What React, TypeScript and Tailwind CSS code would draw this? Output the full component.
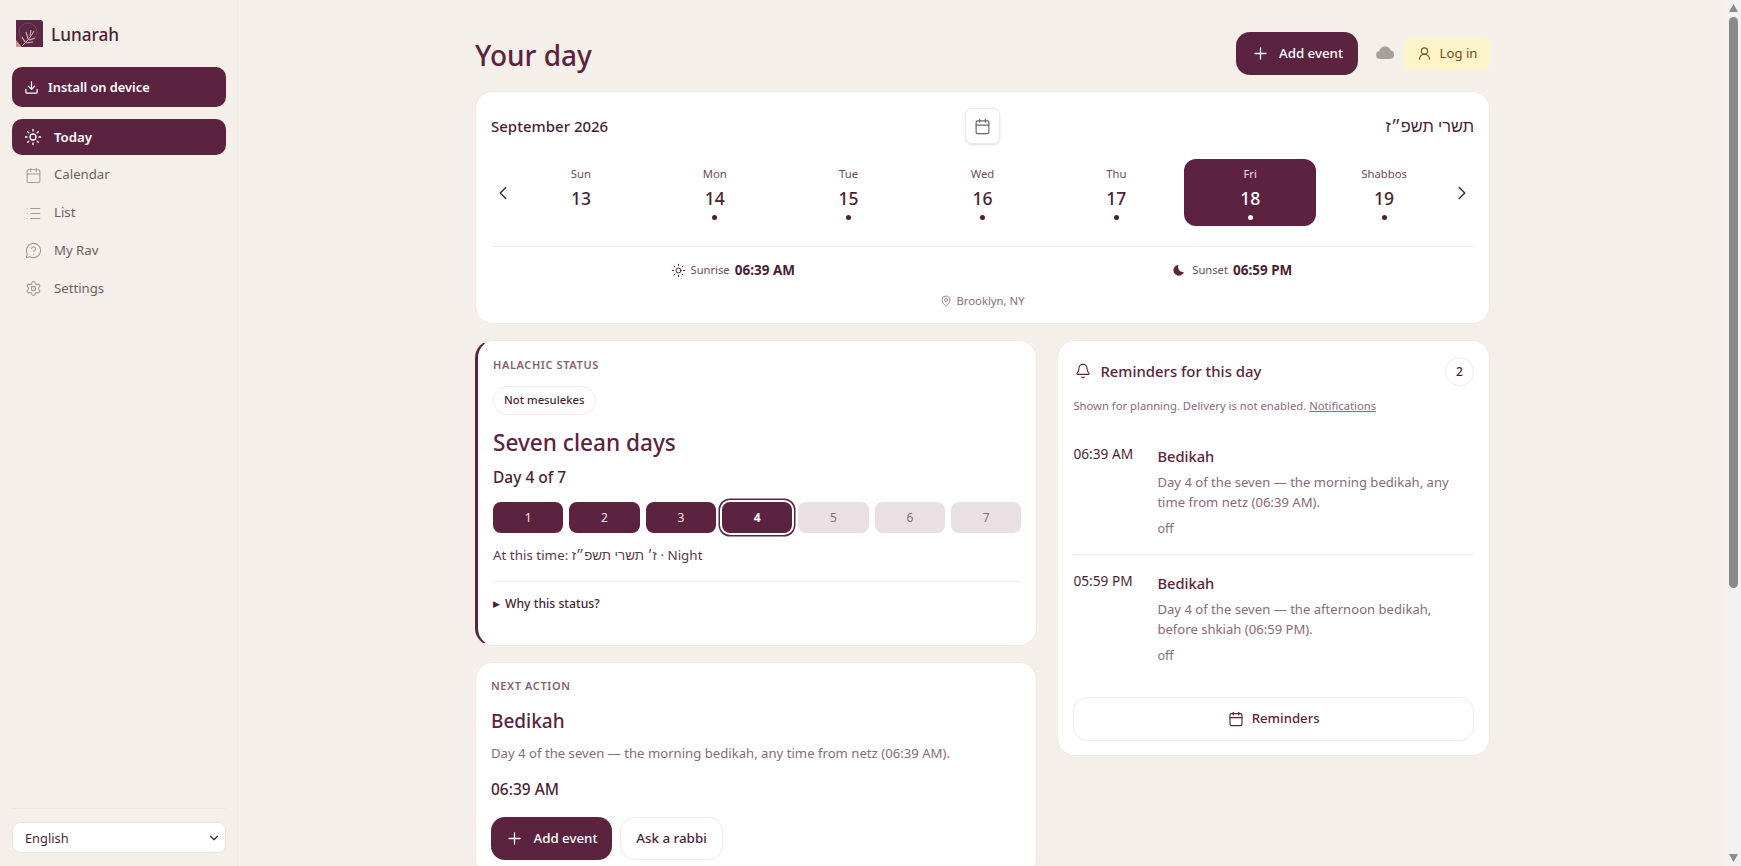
import React from "react";
import { Download, Sun, Calendar, List, MessageCircleQuestion, Settings, Plus, UserRound, ChevronLeft, ChevronRight, MapPin, Bell, ChevronDown } from "lucide-react";

const days = [
  { l: "Sun", n: 13, dot: false },
  { l: "Mon", n: 14, dot: true },
  { l: "Tue", n: 15, dot: true },
  { l: "Wed", n: 16, dot: true },
  { l: "Thu", n: 17, dot: true },
  { l: "Fri", n: 18, dot: true, sel: true },
  { l: "Shabbos", n: 19, dot: true },
];

function Logo() {
  return (
    <svg width="27" height="27" viewBox="0 0 27 27" className="shrink-0">
      <path d="M0 0H24Q27 0 27 3V27H0Z" fill="#5c2742" />
      <path d="M0 27V20L6 27Z" fill="#c99a8c" />
      <circle cx="12" cy="12" r="9" fill="none" stroke="#8a5a72" strokeWidth="0.6" />
      <path d="M6 26C11 21 15 17 18 11" fill="none" stroke="#dcb6c0" strokeWidth="1" />
      <path d="M9 22l-3-5M12 19l-2-7M14 16l1-6M10 23l7-1M13 20l6-2" fill="none" stroke="#d8aebb" strokeWidth="1.1" />
    </svg>
  );
}

function NavItem({ icon, label }: { icon: React.ReactNode; label: string }) {
  return (
    <div className="flex h-[37.7px] items-center gap-[12px] px-[12px] text-[13.2px] text-[#6d6160]">
      <span className="flex w-[18px] justify-center text-[#a39896]">{icon}</span>
      {label}
    </div>
  );
}

function Item({ time, body1, body2 }: { time: string; body1: string; body2: string }) {
  return (
    <div className="grid grid-cols-[84px_1fr]">
      <div className="text-[13.7px] leading-[20px] text-[#4a1f35]">{time}</div>
      <div>
        <div className="mt-[1px] text-[14.7px] leading-[22px] font-medium text-[#5c2340]">Bedikah</div>
        <div className="mt-[5px] text-[13.1px] leading-[20px] text-[#8a6a7a]">
          {body1}
          <br />
          {body2}
        </div>
        <div className="mt-[8px] text-[12.5px] leading-[18px] text-[#8a6a7a]">off</div>
      </div>
    </div>
  );
}

function Scrollbar() {
  return (
    <div className="sticky top-0 flex h-screen w-[15px] shrink-0 flex-col items-center bg-[#f1f1f1]">
      <svg width="9" height="8" viewBox="0 0 9 8" className="mt-[4px] shrink-0"><path d="M4.5 0L9 8H0Z" fill="#8a8a8a" /></svg>
      <div className="mt-[5px] h-[571px] w-[9px] rounded-t-[5px] rounded-b-[5px] bg-[#8a8a8a]" />
      <svg width="9" height="8" viewBox="0 0 9 8" className="mt-auto mb-[4px] shrink-0"><path d="M4.5 8L9 0H0Z" fill="#8a8a8a" /></svg>
    </div>
  );
}

export default function App() {
  return (
    <div className="flex min-h-[1253px] items-start bg-[#f5efea] font-['Noto_Sans','Liberation_Sans',sans-serif] text-[#4a1f35]">
      <aside className="sticky top-0 flex h-screen w-[238px] shrink-0 flex-col border-r border-[#efe7e2] pr-[11px] pl-[12px]">
        <div className="flex h-[67px] items-center gap-[8px] px-[4px] pb-[1px]">
          <Logo />
          <span className="pt-[3px] text-[17.2px] font-medium text-[#4a1f35]">Lunarah</span>
        </div>
        <div className="flex h-[40px] items-center gap-[9px] rounded-[10px] bg-[#5c2340] px-[12px] text-[12.8px] font-semibold text-white">
          <Download size={15} strokeWidth={2} />
          <span className="pt-[1px]">Install on device</span>
        </div>
        <div className="mt-[12px] flex h-[36px] items-center gap-[12px] rounded-[10px] bg-[#5c2340] px-[12px] text-[13.2px] font-semibold text-white">
          <span className="flex w-[18px] justify-center"><Sun size={18} strokeWidth={1.8} /></span>
          <span className="pt-[1px]">Today</span>
        </div>
        <div className="mt-[1.5px]">
          <NavItem icon={<Calendar size={17} strokeWidth={1.5} />} label="Calendar" />
          <NavItem icon={<List size={17} strokeWidth={1.5} />} label="List" />
          <NavItem icon={<MessageCircleQuestion size={17} strokeWidth={1.5} />} label="My Rav" />
          <NavItem icon={<Settings size={17} strokeWidth={1.5} />} label="Settings" />
        </div>
        <div className="mt-auto mb-[13px] border-t border-[#efe7e2] pt-[13px]">
          <div className="flex h-[31px] items-center justify-between rounded-[8px] border border-[#ece4df] bg-white pr-[2px] pl-[12px] text-[12.8px] text-[#4a1f35]">
            <span className="pt-[2px]">English</span>
            <ChevronDown size={14} strokeWidth={2} className="mr-[2px]" />
          </div>
        </div>
      </aside>

      <main className="min-w-0 flex-1 pt-[32px] pr-[236px] pl-[237px]">
        <header className="flex h-[43px] items-center justify-between">
          <h1 className="pt-[2px] text-[28px] leading-[46px] font-medium text-[#5c2340]">Your day</h1>
          <div className="flex items-center">
            <button className="flex h-[43px] w-[122px] items-center justify-center gap-[9px] rounded-[14px] bg-[#5c2340] text-[13.3px] font-medium text-white">
              <Plus size={19} strokeWidth={1.6} />
              Add event
            </button>
            <svg width="20" height="14" viewBox="0 0 20 14" className="mr-[9px] ml-[17px] mb-[4px]">
              <path d="M5 14a4 4 0 0 1-.8-7.9A6 6 0 0 1 15.6 5.2 4.5 4.5 0 0 1 15.5 14Z" fill="#a89e9e" />
            </svg>
            <div className="flex h-[32px] w-[86px] items-center justify-center gap-[8px] rounded-[6px] bg-[#fdf3c8] text-[13.2px] text-[#7a4a1f]">
              <UserRound size={15} strokeWidth={1.7} />
              Log in
            </div>
          </div>
        </header>

        <section className="mt-[16px] rounded-[18px] border border-[#f0e9e4] bg-white px-[15px] pt-[16px] pb-[13px]">
          <div className="grid h-[36px] grid-cols-3 items-center">
            <div className="text-[15px] font-medium text-[#4a1f35]">September 2026</div>
            <div className="flex justify-center">
              <div className="flex h-[36px] w-[35px] items-center justify-center rounded-[7px] border border-[#efe8e4] text-[#6d6160] shadow-sm">
                <Calendar size={17} strokeWidth={1.6} />
              </div>
            </div>
            <div dir="rtl" className="text-right text-[16.4px] font-medium text-[#4a1f35]">תשרי תשפ״ז</div>
          </div>
          <div className="mt-[15px] flex items-center">
            <div className="flex w-[24px] justify-center text-[#4a1f35]"><ChevronLeft size={22} strokeWidth={1.5} /></div>
            <div className="grid flex-1 grid-cols-7 gap-[2px]">
              {days.map((d) => (
                <div key={d.n} className={"flex h-[67px] flex-col items-center rounded-[12px] pt-[6px] " + (d.sel ? "bg-[#5c2340] text-white" : "")}>
                  <div className={"text-[11.3px] leading-[18px] " + (d.sel ? "text-[#f0dfe6]" : "text-[#6f4a5c]")}>{d.l}</div>
                  <div className="mt-[2px] text-[17.5px] leading-[26px] font-medium">{d.n}</div>
                  {d.dot && <div className={"mt-[4px] h-[5px] w-[5px] rounded-full " + (d.sel ? "bg-white" : "bg-[#4a1f35]")} />}
                </div>
              ))}
            </div>
            <div className="flex w-[24px] justify-center text-[#4a1f35]"><ChevronRight size={22} strokeWidth={1.5} /></div>
          </div>
          <div className="mt-[20px] border-t border-[#f1eae7] pt-[13px]">
            <div className="grid grid-cols-2 gap-[16px]">
              <div className="flex items-center justify-center gap-[5px] text-[11.2px] leading-[20px] text-[#6f4a5c]">
                <Sun size={15} strokeWidth={1.6} className="text-[#4a1f35]" />
                Sunrise
                <span className="text-[13.5px] font-bold text-[#4a1f35]">06:39 AM</span>
              </div>
              <div className="flex items-center justify-center gap-[5px] text-[11.2px] leading-[20px] text-[#6f4a5c]">
                <svg width="13" height="13" viewBox="0 0 24 24" className="mr-[2px]"><path d="M12 2a9.5 9.5 0 0 0 10 13A10 10 0 1 1 9 2.2 9 9 0 0 1 12 2Z" fill="#5c2340" /></svg>
                Sunset
                <span className="text-[13.5px] font-bold text-[#4a1f35]">06:59 PM</span>
              </div>
            </div>
            <div className="mt-[12px] flex items-center justify-center gap-[4px] text-[11.3px] leading-[18px] text-[#8a6a7a]">
              <MapPin size={12} strokeWidth={1.5} />
              Brooklyn, NY
            </div>
          </div>
        </section>

        <div className="mt-[16px] grid grid-cols-[1.3fr_1fr] items-start gap-[20px]">
          <div className="flex flex-col gap-[16px]">
            <section className="h-[306px] rounded-[18px] border border-l-[3px] border-[#f0e9e4] border-l-[#5c2340] bg-white pt-[15px] pr-[15px] pl-[15px]">
              <div className="text-[11px] leading-[18px] font-semibold tracking-[0.6px] text-[#8a5f75]">HALACHIC STATUS</div>
              <div className="mt-[12px] inline-flex h-[29px] items-center rounded-full border border-[#f1eae7] px-[10px] text-[11.3px] font-medium text-[#4a1f35]">Not mesulekes</div>
              <div className="mt-[11px] text-[22.6px] leading-[34px] font-medium text-[#5c2340]">Seven clean days</div>
              <div className="mt-[6px] text-[15.5px] leading-[22px] font-medium text-[#4a1f35]">Day 4 of 7</div>
              <div className="mt-[14px] grid grid-cols-7 gap-[6px]">
                {[1, 2, 3, 4, 5, 6, 7].map((n) => (
                  <div
                    key={n}
                    className={
                      "flex h-[31px] items-center justify-center rounded-[8px] text-[12px] " +
                      (n < 4
                        ? "bg-[#5c2340] text-[#f3e3ea]"
                        : n === 4
                          ? "bg-[#5c2340] font-bold text-white shadow-[0_0_0_2px_#fff,0_0_0_3.5px_#5c2340]"
                          : "bg-[#eadfe3] text-[#8a6a7a]")
                    }
                  >
                    {n}
                  </div>
                ))}
              </div>
              <div className="mt-[12px] text-[13.4px] leading-[20px] text-[#5c3a4c]">At this time: ז׳ תשרי תשפ״ז · Night</div>
              <div className="mt-[16px] flex items-center gap-[5px] border-t border-[#f1eae7] pt-[12px] text-[12.2px] leading-[20px] font-medium text-[#4a1f35]">
                <span className="text-[9px]">▶</span>
                Why this status?
              </div>
            </section>

            <section className="rounded-[18px] border border-[#f0e9e4] bg-white px-[15px] pt-[14px] pb-[16px]">
              <div className="text-[11px] leading-[18px] font-semibold tracking-[0.6px] text-[#8a5f75]">NEXT ACTION</div>
              <div className="mt-[12px] text-[19px] leading-[28px] font-medium text-[#5c2340]">Bedikah</div>
              <div className="mt-[8px] text-[13.15px] leading-[20px] text-[#8a6a7a]">Day 4 of the seven — the morning bedikah, any time from netz (06:39 AM).</div>
              <div className="mt-[15px] text-[15.5px] leading-[22px] font-medium text-[#4a1f35]">06:39 AM</div>
              <div className="mt-[17px] flex gap-[8px]">
                <button className="flex h-[43px] w-[121px] items-center justify-center gap-[9px] rounded-[14px] bg-[#5c2340] text-[13.3px] font-medium text-white">
                  <Plus size={19} strokeWidth={1.6} />
                  Add event
                </button>
                <button className="flex h-[43px] w-[103px] items-center justify-center rounded-[14px] border border-[#f0e9e4] text-[13.4px] font-medium text-[#4a1f35]">Ask a rabbi</button>
              </div>
            </section>
          </div>

          <section className="h-[416px] rounded-[18px] border border-[#f0e9e4] bg-white px-[15px] pt-[15px]">
            <div className="flex h-[31px] items-center justify-between">
              <div className="flex items-center gap-[9px] pl-[2px] text-[14.9px] font-medium text-[#5c2340]">
                <Bell size={16} strokeWidth={1.7} />
                Reminders for this day
              </div>
              <div className="flex h-[29px] w-[29px] items-center justify-center rounded-full border border-[#f1eae7] text-[12px] font-medium text-[#4a1f35]">2</div>
            </div>
            <div className="mt-[10px] text-[11.25px] leading-[18px] text-[#8a6a7a]">
              Shown for planning. Delivery is not enabled. <span className="underline">Notifications</span>
            </div>
            <div className="mt-[29px]">
              <Item time="06:39 AM" body1="Day 4 of the seven — the morning bedikah, any" body2="time from netz (06:39 AM)." />
            </div>
            <div className="mt-[16px] border-t border-[#efe8e4] pt-[16px]">
              <Item time="05:59 PM" body1="Day 4 of the seven — the afternoon bedikah," body2="before shkiah (06:59 PM)." />
            </div>
            <button className="mt-[32px] flex h-[44px] w-full items-center justify-center gap-[8px] rounded-[14px] border border-[#f0e9e4] text-[13.2px] font-medium text-[#5c2340]">
              <Calendar size={16} strokeWidth={1.7} />
              Reminders
            </button>
          </section>
        </div>
      </main>
      <Scrollbar />
    </div>
  );
}
